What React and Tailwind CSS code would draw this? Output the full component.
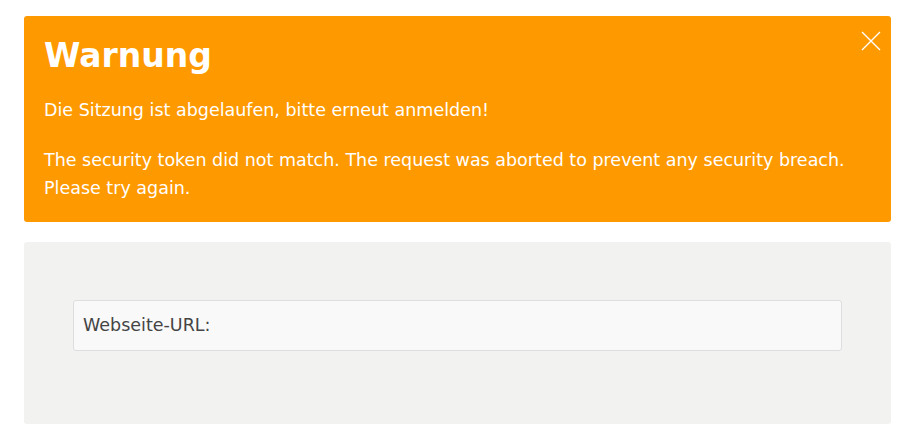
import React from "react";

const App = () => {
  return (
    <div
      className="min-h-screen bg-white pl-6 pr-[9px] pt-4 text-[17.5px]"
      style={{ fontFamily: '"DejaVu Sans", Verdana, sans-serif' }}
    >
      {/* Warning box */}
      <div className="relative rounded-[3px] bg-[#ff9900] px-5 pt-[18px] pb-[20px] text-white">
        <button className="absolute right-[10px] top-[15px] h-5 w-5" aria-label="close">
          <svg viewBox="0 0 20 20" className="h-5 w-5" stroke="white" strokeWidth="1.4" fill="none">
            <path d="M1 1L19 19M19 1L1 19" />
          </svg>
        </button>
        <h1 className="text-[33px] font-bold leading-[44px]">Warnung</h1>
        <p className="mt-[18px] leading-[28px]">Die Sitzung ist abgelaufen, bitte erneut anmelden!</p>
        <p className="mt-[22px] leading-[28px]">
          The security token did not match. The request was aborted to prevent any security breach.
          Please try again.
        </p>
      </div>

      {/* Form */}
      <div className="mt-5 rounded-[3px] bg-[#f2f2f1] px-[49px] pt-[58px] pb-[73px]">
        <div className="flex h-[51px] items-center rounded-[3px] border border-[#dedede] bg-[#f9f9f9] px-[9px] text-[#444]">
          Webseite-URL:
        </div>
      </div>
    </div>
  );
};

export default App;
